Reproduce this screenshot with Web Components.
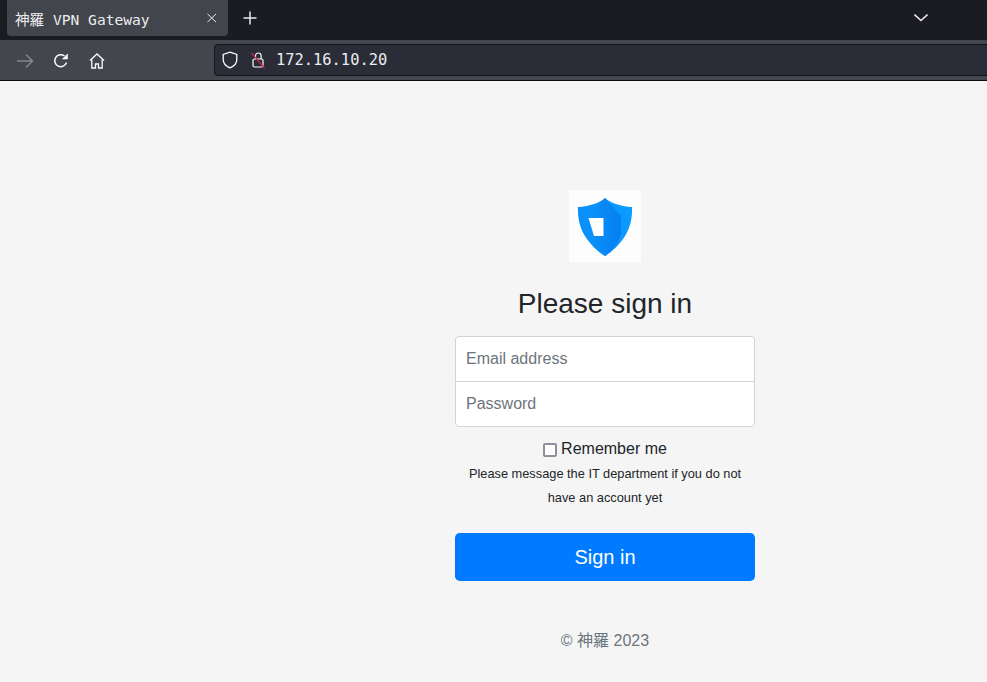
<!DOCTYPE html>
<html lang="en">
<head>
<meta charset="utf-8">
<title>神羅 VPN Gateway</title>
<style>
  html, body { margin: 0; height: 100%; overflow: hidden; background: #f5f5f5; }
  body { display: flex; flex-direction: column; font-family: "Liberation Sans", "Noto Sans CJK JP", sans-serif; }
</style>
</head>
<body>
<browser-tabs title="神羅 VPN Gateway"></browser-tabs>
<browser-toolbar url="172.16.10.20"></browser-toolbar>
<signin-page>
  <shield-logo></shield-logo>
  <signin-form></signin-form>
</signin-page>

<script>
// Tab strip
class BrowserTabs extends HTMLElement {
  constructor() {
    super();
    this.attachShadow({ mode: 'open' });
  }

  connectedCallback() {
    const title = this.getAttribute('title') || '';
    this.shadowRoot.innerHTML = `
      <style>
        :host {
          display: flex;
          align-items: flex-start;
          height: 40px;
          flex: none;
          background: #1b1c21;
          font-family: "DejaVu Sans Mono", "Noto Sans CJK JP", monospace;
        }
        .tab {
          display: flex;
          align-items: center;
          justify-content: space-between;
          box-sizing: border-box;
          width: 221px;
          height: 36px;
          margin-left: 7px;
          padding: 0 10px 0 8px;
          background: #42454c;
          border-radius: 0 0 4px 4px;
          color: #ececf0;
          font-size: 14.6px;
          white-space: pre;
        }
        .new { margin: 10px 0 0 14px; width: 16px; height: 16px; }
        .more { margin: 11px 0 0 auto; margin-right: 59px; width: 14px; height: 14px; }
        svg { display: block; fill: none; stroke: #e9e9ec; }
      </style>
      <div class="tab">
        <span>${title}</span>
        <svg width="12" height="12" viewBox="0 0 12 12" stroke-width="1"><path d="M1.500 2l8.500 8M10 2l-8.500 8"/></svg>
      </div>
      <svg class="new" viewBox="0 0 16 16" stroke-width="1.5"><path d="M8 1.500v13M1.500 8h13"/></svg>
      <svg class="more" viewBox="0 0 14 14" stroke-width="1.6"><path d="M.5 3.500l6.500 6 6.500-6"/></svg>
    `;
  }
}

// Navigation row with the address bar
class BrowserToolbar extends HTMLElement {
  constructor() {
    super();
    this.attachShadow({ mode: 'open' });
  }

  connectedCallback() {
    const url = this.getAttribute('url') || '';
    this.shadowRoot.innerHTML = `
      <style>
        :host {
          display: flex;
          align-items: center;
          box-sizing: border-box;
          height: 41px;
          flex: none;
          padding-left: 16px;
          background: #43464d;
          border-bottom: 1px solid #0c0c0e;
        }
        svg { display: block; fill: none; flex: none; }
        .nav { stroke: #fbfbfe; stroke-width: 1.5; margin: 2px 19px 0 0; }
        .bar {
          display: flex;
          align-items: center;
          box-sizing: border-box;
          height: 32px;
          flex: 1;
          padding-left: 7px;
          background: #2a2c38;
          border: 1px solid #141519;
          border-right: 0;
          border-radius: 4px 0 0 4px;
          color: #ececf0;
          font: 15.4px "DejaVu Sans Mono", monospace;
        }
        .bar span { margin-left: 10px; }
      </style>
      <svg class="nav" width="18" height="16" viewBox="0 0 18 16" style="stroke:#85878c"><path d="M1 8h15.500M10 1.500L16.500 8 10 14.500"/></svg>
      <svg class="nav" width="16" height="16" viewBox="0 0 16 16" style="margin-right:20px"><path d="M13.500 9.500A6 6 0 1 1 11.500 3"/><path d="M14.500 1v5h-5z" fill="#fbfbfe" stroke-width=".6"/></svg>
      <svg class="nav" width="16" height="16" viewBox="0 0 16 16" style="stroke-width:1.3;margin-right:109px"><path d="M1 7.500L8 1l7 6.500M2.800 6.500V15h3.700v-4h3v4h3.700V6.500"/></svg>
      <div class="bar">
        <svg width="16" height="18" viewBox="0 0 16 18" stroke="#fbfbfe" stroke-width="1.3"><path d="M8 1.200l6.800 2.300v5c0 4-3 6.800-6.800 8.300-3.800-1.500-6.800-4.300-6.800-8.300v-5z"/></svg>
        <svg width="16" height="18" viewBox="0 0 16 18" stroke="#fbfbfe" stroke-width="1.200" style="margin-left:12px"><path d="M5.500 8V4.800a2.800 2.800 0 0 1 5.600 0V8"/><rect x="3" y="8" width="10" height="8" rx="1.500"/><path d="M1.500 2l13 15" stroke="#d3264a" stroke-width="1.200"/></svg>
        <span>${url}</span>
      </div>
    `;
  }
}

// Page area, holds the centred column
class SigninPage extends HTMLElement {
  constructor() {
    super();
    this.attachShadow({ mode: 'open' });
  }

  connectedCallback() {
    this.shadowRoot.innerHTML = `
      <style>
        :host {
          display: block;
          flex: 1;
          box-sizing: border-box;
          padding: 109px 0 0 455px;
          background: #f5f5f5;
        }
        .col {
          display: flex;
          flex-direction: column;
          align-items: center;
          width: 300px;
        }
      </style>
      <div class="col"><slot></slot></div>
    `;
  }
}

// Blue shield logo on its white square
class ShieldLogo extends HTMLElement {
  constructor() {
    super();
    this.attachShadow({ mode: 'open' });
  }

  connectedCallback() {
    this.shadowRoot.innerHTML = `
      <style>
        :host { display: block; width: 72px; height: 72px; background: #fdfdfd; }
        svg { display: block; }
      </style>
      <svg width="72" height="72" viewBox="0 0 72 72">
        <defs>
          <linearGradient id="g" x1="0" y1="0" x2="1" y2="0">
            <stop offset="0" stop-color="#0a8ffa"/>
            <stop offset="1" stop-color="#0a9cff"/>
          </linearGradient>
          <linearGradient id="d" gradientUnits="userSpaceOnUse" x1="24" y1="0" x2="52" y2="0">
            <stop offset="0" stop-color="#0a8ffa"/>
            <stop offset="1" stop-color="#067ff0"/>
          </linearGradient>
        </defs>
        <path d="M36 8C41 12.500 51 16.500 63 17 63.500 28 61 38 56 46 51 54 44 61 36 66 28 61 21 54 16 46 11 38 8.500 28 9 17 21 16.500 31 12.500 36 8Z" fill="url(#g)"/>
        <path d="M36 8L52 26V45C49 54 43 61 36 66 30 62 26 58 24 55V20Z" fill="url(#d)"/>
        <path d="M19.500 28H34.500V46H25Z" fill="#fff"/>
      </svg>
    `;
  }
}

// The sign in form
class SigninForm extends HTMLElement {
  constructor() {
    super();
    this.attachShadow({ mode: 'open' });
  }

  connectedCallback() {
    this.shadowRoot.innerHTML = `
      <style>
        :host {
          display: block;
          width: 300px;
          text-align: center;
          color: #212529;
          font: 16px/24px "Liberation Sans", "Noto Sans CJK JP", sans-serif;
        }
        h1 { margin: 25px 0 15px; font-size: 28px; font-weight: 400; line-height: 34px; }
        .fields { display: flex; flex-direction: column; }
        input {
          box-sizing: border-box;
          width: 100%;
          height: 46px;
          padding: 10px;
          border: 1px solid #ced4da;
          background: #fff;
          font: inherit;
          outline: 0;
        }
        input::placeholder { color: #6c757d; opacity: 1; }
        input[type=email] { border-radius: 4px 4px 0 0; margin-bottom: -1px; }
        input[type=password] { border-radius: 0 0 4px 4px; }
        label { display: flex; align-items: center; justify-content: center; margin-top: 10px; }
        .check {
          box-sizing: border-box;
          width: 14px;
          height: 14px;
          margin: 2px 4px 0 0;
          background: #fff;
          border: 2px solid #8f8f9d;
          border-radius: 2px;
        }
        p { margin: 1px 0 23px; font-size: 12.8px; }
        button {
          display: block;
          width: 100%;
          height: 48px;
          border: 0;
          border-radius: 4.800px;
          background: #007bff;
          color: #fff;
          font: 20px "Liberation Sans", sans-serif;
        }
        footer { margin-top: 48px; color: #6c757d; }
      </style>
      <h1>Please sign in</h1>
      <div class="fields">
        <input type="email" placeholder="Email address">
        <input type="password" placeholder="Password">
      </div>
      <label><span class="check"></span>Remember me</label>
      <p>Please message the IT department if you do not have an account yet</p>
      <button type="button">Sign in</button>
      <footer>© 神羅 2023</footer>
    `;
  }
}

customElements.define('browser-tabs', BrowserTabs);
customElements.define('browser-toolbar', BrowserToolbar);
customElements.define('signin-page', SigninPage);
customElements.define('shield-logo', ShieldLogo);
customElements.define('signin-form', SigninForm);
</script>
</body>
</html>
